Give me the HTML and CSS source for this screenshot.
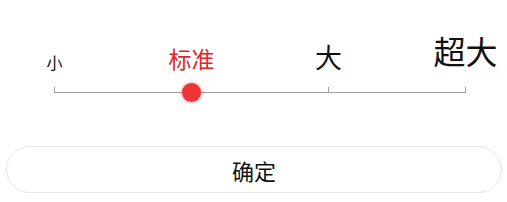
FILE: index.html
```html
<!DOCTYPE html>
<html lang="zh-CN">
<head>
<meta charset="utf-8">
<title>字体大小</title>
<link rel="stylesheet" href="styles.css">
</head>
<body>
<div class="page">
  <div class="slider">
    <div class="labels">
      <div class="label label-s"><span>小</span></div>
      <div class="label label-m active"><span>标准</span></div>
      <div class="label label-l"><span>大</span></div>
      <div class="label label-xl"><span>超大</span></div>
    </div>
    <div class="track">
      <div class="tick"></div>
      <div class="tick"><div class="thumb"></div></div>
      <div class="tick"></div>
      <div class="tick"></div>
    </div>
  </div>
  <button class="confirm" type="button">确定</button>
</div>
</body>
</html>
```
FILE: styles.css
```css
html, body {
  margin: 0;
  padding: 0;
  background: #ffffff;
}
body {
  font-family: "Noto Sans CJK SC", "Noto Sans", sans-serif;
  color: #111111;
  width: 507px;
  height: 202px;
  overflow: hidden;
}
.page {
  display: flex;
  flex-direction: column;
}
.slider {
  margin-left: 54px;
  width: 412px;
}
.labels {
  display: flex;
  justify-content: space-between;
  align-items: flex-end;
  height: 72px;
}
.label {
  width: 1px;
  display: flex;
  justify-content: center;
  line-height: 1;
  white-space: nowrap;
}
.label span { display: block; }
.label-s { font-size: 16px; padding-bottom: 2px; }
.label-m { font-size: 23px; padding-bottom: 2px; }
.label-l { font-size: 27px; padding-bottom: 2px; }
.label-xl { font-size: 32px; padding-bottom: 6px; }
.active { color: #e3242b; }
.track {
  margin-top: 15px;
  height: 5px;
  border-bottom: 1px solid #9e9e9e;
  display: flex;
  justify-content: space-between;
}
.tick {
  width: 1px;
  height: 5px;
  background: #9e9e9e;
  position: relative;
}
.thumb {
  position: absolute;
  left: -9px;
  top: -4px;
  width: 19px;
  height: 19px;
  border-radius: 50%;
  background: #ef3438;
  box-shadow: 0 0 3px 1px rgba(239, 52, 56, 0.35);
}
.confirm {
  margin: 53px 5px 0 6px;
  height: 47px;
  border: 1px solid #e6e6e6;
  border-radius: 24px;
  background: #ffffff;
  font-family: inherit;
  font-size: 22px;
  color: #111111;
  padding: 0;
  line-height: 1;
}
```
